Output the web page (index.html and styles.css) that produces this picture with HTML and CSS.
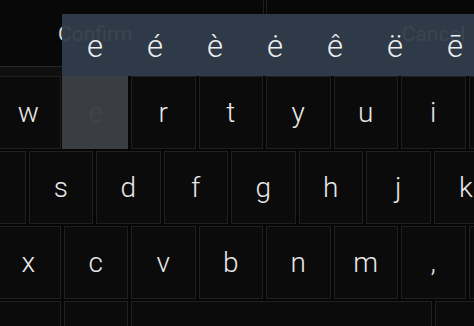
FILE: index.html
```html
<!DOCTYPE html>
<html>
<head>
<meta charset="utf-8">
<link rel="stylesheet" href="styles.css">
</head>
<body>
<div class="kb">
  <div class="topbar">
    <div class="action">Confirm</div>
    <div class="action">Cancel</div>
  </div>
  <div class="band"></div>
  <div class="rows">
    <div class="row">
      <div class="key">q</div><div class="key">w</div><div class="key">e</div><div class="key">r</div><div class="key">t</div><div class="key">y</div><div class="key">u</div><div class="key">i</div><div class="key">o</div><div class="key">p</div>
    </div>
    <div class="row row-offset">
      <div class="key">a</div><div class="key">s</div><div class="key">d</div><div class="key">f</div><div class="key">g</div><div class="key">h</div><div class="key">j</div><div class="key">k</div><div class="key">l</div>
    </div>
    <div class="row">
      <div class="key">z</div><div class="key">x</div><div class="key">c</div><div class="key">v</div><div class="key">b</div><div class="key">n</div><div class="key">m</div><div class="key">,</div><div class="key">.</div><div class="key"></div>
    </div>
    <div class="row">
      <div class="key w2"></div><div class="key"></div><div class="key w45"></div><div class="key w25"></div>
    </div>
  </div>
</div>
<div class="popup">
  <div class="alt">e</div><div class="alt">é</div><div class="alt">è</div><div class="alt">ė</div><div class="alt">ê</div><div class="alt">ë</div><div class="alt">ē</div>
</div>
<div class="popup-key"></div>
</body>
</html>
```
FILE: styles.css
```css
html, body {
  margin: 0;
  padding: 0;
  background: #060606;
  overflow: hidden;
  width: 474px;
  height: 326px;
  font-family: Roboto, "Liberation Sans", sans-serif;
}
.kb {
  width: 675px;
  margin-left: -73px;
}
.topbar {
  display: flex;
  height: 66px;
  gap: 2px;
}
.action {
  flex: 1;
  display: flex;
  align-items: center;
  justify-content: center;
  padding-top: 2px;
  color: #d8d8d8;
  font-size: 21px;
  border-right: 1px solid #1e1e1e;
  border-left: 1px solid #1e1e1e;
  background: #080808;
}
.band {
  height: 9px;
  background: #101010;
  border-top: 1px solid #262626;
}
.rows {
  display: flex;
  flex-direction: column;
  gap: 2px;
}
.row {
  display: flex;
  height: 73px;
}
.row-offset {
  padding-left: 32.5px;
}
.key {
  box-sizing: border-box;
  width: 64.5px;
  margin: 0 1.5px;
  flex: none;
  background: #0b0b0b;
  border: 1px solid #202020;
  display: flex;
  align-items: center;
  justify-content: center;
  color: #e8e8e8;
  font-size: 28px;
  font-weight: 300;
}
.key.w2 { width: 132px; }
.key.w45 { width: 300.75px; }
.key.w25 { width: 165.75px; }
.popup {
  position: absolute;
  left: 62px;
  top: 14px;
  width: 430px;
  height: 62px;
  box-sizing: border-box;
  padding-left: 3px;
  background: rgba(48, 61, 75, 0.95);
  display: flex;
  align-items: center;
}
.alt {
  width: 60px;
  flex: none;
  text-align: center;
  color: #eef0f2;
  font-size: 31px;
  font-weight: 300;
  padding-top: 3px;
}
.popup-key {
  position: absolute;
  left: 62px;
  top: 76px;
  width: 66px;
  height: 73px;
  background: rgba(60, 63, 68, 0.97);
}
```
